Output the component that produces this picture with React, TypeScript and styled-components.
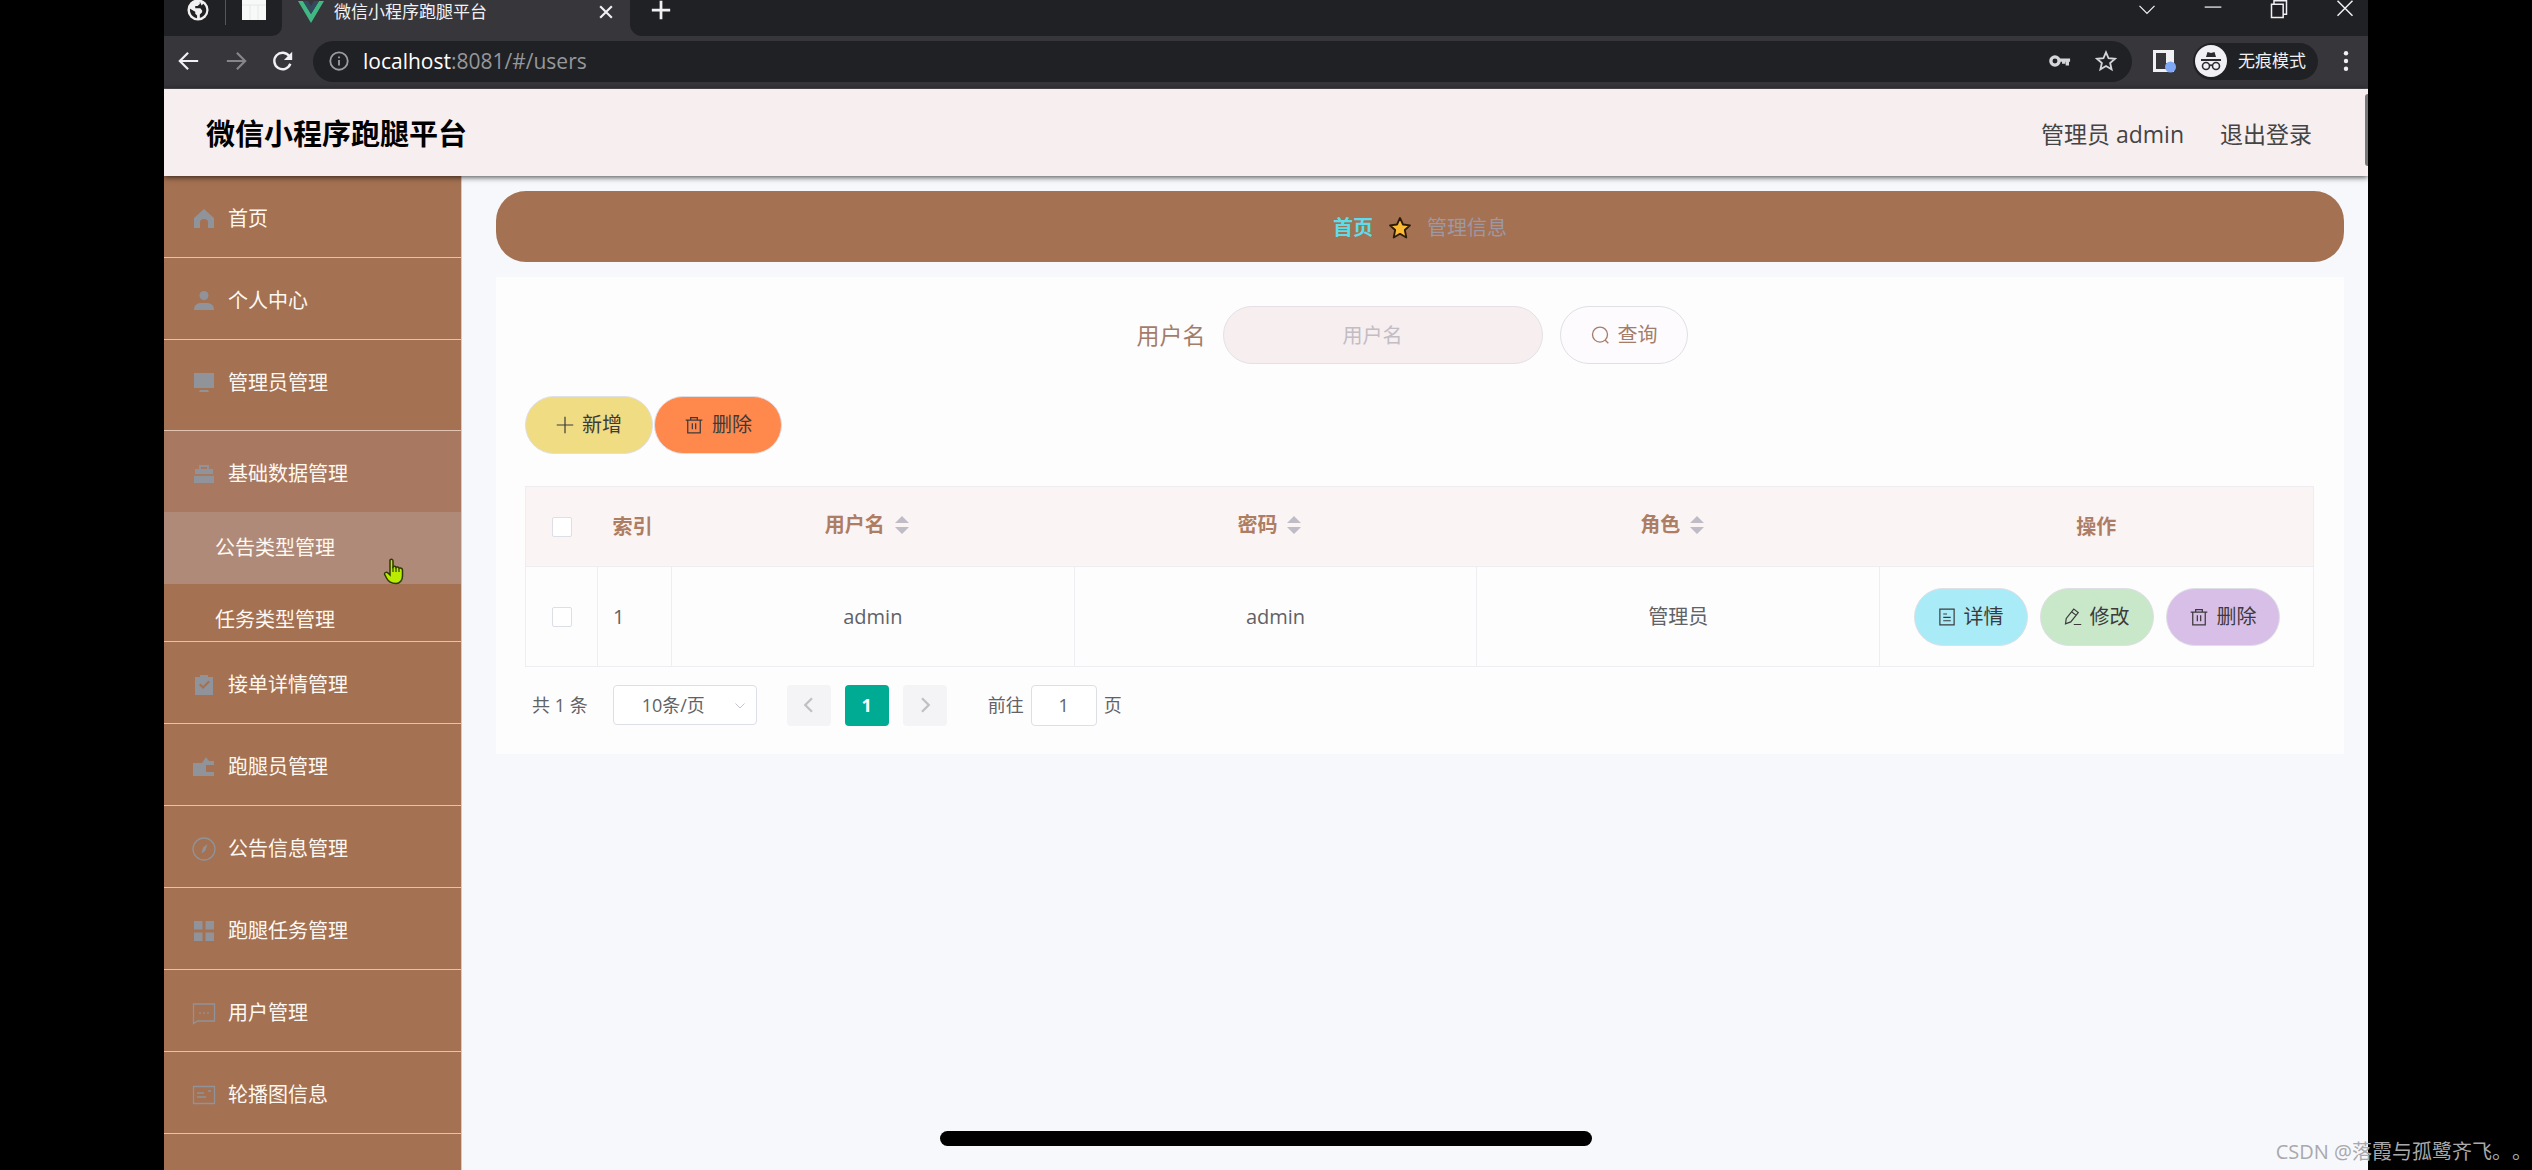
import React from "react";
import styled, { createGlobalStyle } from "styled-components";

const GlobalStyle = createGlobalStyle`
  *, *::before, *::after { box-sizing: border-box; }
  body {
    margin: 0;
    background: #000;
    font-family: "Open Sans", "Noto Sans CJK SC", sans-serif;
    font-size: 20px;
    line-height: 28px;
    color: #606266;
  }
  button, input, select { font: inherit; color: inherit; margin: 0; }
  button { cursor: pointer; border: 0; padding: 0; background: none; }
  a { color: inherit; text-decoration: none; }
  svg { display: block; flex: none; }
`;

/* ---------- frame ---------- */

const Screen = styled.div`
  position: relative;
  height: 100vh;
  padding: 0 164px;
  background: #000;
  overflow: hidden;
`;

const Window = styled.div`
  display: flex;
  flex-direction: column;
  height: 100%;
  background: #f7f8fc;
`;

const HomeIndicator = styled.div`
  position: absolute;
  left: 50%;
  bottom: 24px;
  width: 652px;
  height: 15px;
  margin-left: -326px;
  border-radius: 8px;
  background: #000;
`;

const Watermark = styled.div`
  position: absolute;
  right: 0;
  bottom: 4px;
  font-size: 20px;
  white-space: nowrap;
  text-spacing-trim: space-all;
  color: #a9a9ab;
`;

/* ---------- browser chrome ---------- */

const TabStrip = styled.div`
  display: flex;
  height: 36px;
  flex: none;
  background: #37363b;
  color: #f1f1f3;
`;

const PinnedTabs = styled.div`
  display: flex;
  align-items: center;
  gap: 16px;
  width: 118px;
  padding: 0 0 16px 23px;
  border-radius: 0 0 10px 0;
  background: #202124;
`;

const TabDivider = styled.span`
  width: 1px;
  height: 30px;
  background: #55565a;
`;

const ActiveTab = styled.div`
  display: flex;
  align-items: center;
  gap: 10px;
  width: 348px;
  padding: 0 14px 12px 16px;
  font-size: 17px;
  line-height: 24px;
`;

const TabTitle = styled.span`
  flex: 1;
`;

const StripRest = styled.div`
  display: flex;
  flex: 1;
  align-items: center;
  justify-content: space-between;
  padding: 0 13px 16px 20px;
  border-radius: 0 0 0 12px;
  background: #202124;
`;

const WindowButtons = styled.div`
  display: flex;
  gap: 46px;
`;

const Toolbar = styled.div`
  display: flex;
  align-items: center;
  height: 53px;
  flex: none;
  padding: 0 11px 2px 14px;
  background: #37363b;
  border-bottom: 1px solid #57565b;
  color: #f1f1f3;
`;

const NavButtons = styled.div`
  display: flex;
  gap: 25px;
  margin-right: 19px;
`;

const NavButton = styled.button<{ $dim?: boolean }>`
  color: ${(p) => (p.$dim ? "#85858a" : "#f1f1f3")};
`;

const AddressBar = styled.div`
  display: flex;
  flex: 1;
  align-items: center;
  height: 41px;
  padding: 0 15px;
  gap: 13px;
  border-radius: 21px;
  background: #202124;
`;

const Url = styled.div`
  flex: 1;
  font-size: 21px;
  color: #96979b;
  b { font-weight: 400; color: #fff; }
`;

const AddressIcons = styled.div`
  display: flex;
  gap: 24px;
  color: #d5d6d9;
`;

const ToolbarEnd = styled.div`
  display: flex;
  align-items: center;
  gap: 17px;
  margin-left: 20px;
`;

const Incognito = styled.div`
  display: flex;
  align-items: center;
  gap: 11px;
  height: 37px;
  padding: 0 12px 0 2px;
  border-radius: 19px;
  background: #202124;
  font-size: 17px;
`;

/* ---------- app header ---------- */

const Header = styled.header`
  position: relative;
  z-index: 1;
  display: flex;
  align-items: center;
  flex: none;
  height: 87px;
  padding: 2px 56px 0 42px;
  background: #f7eef0;
  box-shadow: 0 1px 6px rgba(0, 0, 0, 0.75);
`;

const Brand = styled.h1`
  flex: 1;
  margin: 0;
  font-size: 29px;
  line-height: 40px;
  font-weight: 700;
  color: #000;
`;

const HeaderLinks = styled.div`
  display: flex;
  gap: 36px;
  font-size: 23px;
  line-height: 32px;
  color: #444;
`;

const ScrollThumb = styled.div`
  position: absolute;
  right: 0;
  top: 5px;
  width: 3px;
  height: 72px;
  border-radius: 3px 0 0 3px;
  background: #77777a;
`;

/* ---------- sidebar ---------- */

const Body = styled.div`
  display: flex;
  flex: 1;
  min-height: 0;
`;

const Sidebar = styled.nav`
  width: 298px;
  flex: none;
  overflow: hidden;
  background: #a47152;
  border-right: 1px solid #dcc8be;
  color: #fff8f0;
`;

const MenuList = styled.ul`
  margin: 0;
  padding: 0;
  list-style: none;
`;

const MenuEntry = styled.li<{ $tall?: boolean }>`
  padding-bottom: ${(p) => (p.$tall ? 9 : 0)}px;
  border-bottom: 1px solid #e2c2b0;
`;

const MenuLink = styled.a<{ $open?: boolean }>`
  display: flex;
  align-items: center;
  gap: 12px;
  height: 81px;
  padding: 4px 0 0 28px;
  background: ${(p) => (p.$open ? "#a97861" : "transparent")};
  svg { color: #909399; }
`;

const SubMenu = styled.ul`
  margin: 0;
  padding: 0;
  height: 129px;
  overflow: hidden;
  list-style: none;
`;

const SubItem = styled.li<{ $hover?: boolean }>`
  position: relative;
  background: ${(p) => (p.$hover ? "#b08a78" : "transparent")};
`;

const SubLink = styled.a`
  display: flex;
  align-items: center;
  height: 72px;
  padding-left: 51px;
`;

const Pointer = styled.span`
  position: absolute;
  left: 219px;
  top: 46px;
`;

/* ---------- content ---------- */

const Main = styled.main`
  flex: 1;
  min-width: 0;
  padding: 15px 24px 0 34px;
`;

const Breadcrumb = styled.div`
  display: flex;
  align-items: center;
  justify-content: center;
  gap: 15px;
  height: 71px;
  padding-top: 2px;
  margin-bottom: 15px;
  border-radius: 30px;
  background: #a47152;
  color: #9d98a3;
  a { font-weight: 700; color: #5fdcea; }
`;

const Panel = styled.section`
  padding: 29px 30px 28px 29px;
  background: #fefdfe;
`;

const SearchForm = styled.form`
  display: flex;
  align-items: center;
  justify-content: center;
  gap: 17px;
  padding-right: 15px;
  margin-bottom: 32px;
`;

const SearchLabel = styled.label`
  font-size: 23px;
  line-height: 32px;
  color: #a47d6a;
`;

const SearchInput = styled.input`
  width: 320px;
  height: 58px;
  padding: 0 20px 0 0;
  border: 1px solid #e4e0e6;
  border-radius: 29px;
  background: #f7eef0;
  text-align: center;
  outline: none;
  &::placeholder { color: #c2bcc4; opacity: 1; }
`;

const PillButton = styled.button<{ $bg: string; $fg?: string; $compact?: boolean }>`
  display: flex;
  align-items: center;
  justify-content: center;
  gap: 8px;
  width: ${(p) => (p.$compact ? 114 : 128)}px;
  height: 58px;
  border: 1px solid #dfdfe6;
  border-radius: 29px;
  background: ${(p) => p.$bg};
  color: ${(p) => p.$fg ?? "#3d3a3c"};
`;

const ActionBar = styled.div`
  display: flex;
  gap: 1px;
  margin-bottom: 32px;
`;

const RowActions = styled.div`
  display: flex;
  justify-content: center;
  gap: 12px;
`;

const Table = styled.table`
  width: 100%;
  table-layout: fixed;
  border-collapse: collapse;
  border: 1px solid #efedf1;
`;

const Th = styled.th<{ $left?: boolean }>`
  height: 80px;
  padding: 0 15px;
  text-align: ${(p) => (p.$left ? "left" : "center")};
  font-weight: 700;
  background: #fbf4f4;
  color: #ad7d64;
`;

const Td = styled.td<{ $left?: boolean }>`
  height: 100px;
  padding: 0 15px;
  text-align: ${(p) => (p.$left ? "left" : "center")};
  border: 1px solid #efedf1;
`;

const Sortable = styled.div`
  display: flex;
  align-items: center;
  justify-content: center;
  gap: 10px;
  padding: 0 12px 4px 0;
`;

const SortButton = styled.button`
  color: #c0bcc6;
`;

const CheckBox = styled.input`
  appearance: none;
  display: block;
  width: 20px;
  height: 20px;
  margin: 0 auto;
  border: 1px solid #dcdfe6;
  border-radius: 2px;
  background: #fff;
`;

const Pagination = styled.div`
  display: flex;
  align-items: center;
  height: 42px;
  margin-top: 17px;
  padding-left: 7px;
  font-size: 18px;
`;

const SizePicker = styled.div`
  position: relative;
  margin: 0 30px 0 25px;
  svg {
    position: absolute;
    right: 11px;
    top: 15px;
    color: #c0c4cc;
    pointer-events: none;
  }
`;

const SizeSelect = styled.select`
  appearance: none;
  display: block;
  width: 144px;
  height: 40px;
  padding: 0 28px;
  border: 1px solid #dcdfe6;
  border-radius: 4px;
  background: #fff;
`;

const Pager = styled.div`
  display: flex;
  gap: 14px;
  margin-right: 41px;
`;

const PageButton = styled.button<{ $active?: boolean }>`
  display: flex;
  align-items: center;
  justify-content: center;
  width: 44px;
  height: 41px;
  border-radius: 4px;
  font-weight: 700;
  background: ${(p) => (p.$active ? "#00ab93" : "#f4f3f5")};
  color: ${(p) => (p.$active ? "#fff" : "#c0c0c4")};
`;

const Jumper = styled.label`
  display: flex;
  align-items: center;
  gap: 7px;
`;

const PageInput = styled.input`
  width: 66px;
  height: 41px;
  border: 1px solid #dcdfe6;
  border-radius: 4px;
  background: #fff;
  text-align: center;
  outline: none;
`;

/* ---------- icons ---------- */

type IconProps = { size?: number; children: React.ReactNode; fill?: boolean; w?: number };

const Icon = ({ size = 24, children, fill, w = 2 }: IconProps) => (
  <svg
    width={size}
    height={size}
    viewBox="0 0 24 24"
    fill={fill ? "currentColor" : "none"}
    stroke={fill ? "none" : "currentColor"}
    strokeWidth={w}
    aria-hidden="true"
  >
    {children}
  </svg>
);

const GlobeIcon = () => (
  <Icon size={22}>
    <circle cx="12" cy="12" r="11.500" fill="#f1f1f3" stroke="none" />
    <path
      d="M14 3v2.500l-2.500 2H9V10h5.500l2 2.500v2L14 17v3.500c4-.8 7-4.300 7-8.500 0-2.800-1.300-5.200-3.300-6.900L16 7zM3.300 10.500C2.600 15.500 6 20 11 20.900V18l-2-2v-2z"
      fill="#202124"
      stroke="none"
    />
  </Icon>
);

const PageIcon = () => (
  <svg width="24" height="20" viewBox="0 0 24 20" aria-hidden="true">
    <path d="M0 0h24v20H0z" fill="#f7f9f8" />
    <path d="M0 5h24M8 5v15M16 5v15" stroke="#e3e8e6" />
  </svg>
);

const VueIcon = () => (
  <svg width="26" height="22" viewBox="0 0 26 22" aria-hidden="true">
    <path d="M0 0h5l8 13 8-13h5L13 22z" fill="#41b883" />
    <path d="M5 0h5l3 5 3-5h5l-8 13z" fill="#35495e" />
  </svg>
);

const Trash = () => (
  <Icon size={20} w={1.5}>
    <path d="M2 6h20M8 6V3h8v3M4.500 6v15.500h15V6M10 10v7M14 10v7" />
  </Icon>
);

const Chevron = ({ d, size = 20, w = 2 }: { d: string; size?: number; w?: number }) => (
  <Icon size={size} w={w}><path d={d} /></Icon>
);

const SortArrows = () => (
  <svg width="14" height="18" viewBox="0 0 14 18" fill="currentColor" aria-hidden="true">
    <path d="M7 0l7 7H0zM7 18l7-7H0z" />
  </svg>
);

const menuIcons: Record<string, React.ReactNode> = {
  home: <Icon fill><path d="M12 2L2 11v10h6v-6c0-2 2-3 4-3s4 1 4 3v6h6V11z" /></Icon>,
  user: <Icon fill><circle cx="12" cy="6.500" r="4.500" /><path d="M2 21c0-5 3-7 7-7h6c4 0 7 2 7 7z" /></Icon>,
  monitor: <Icon fill><path d="M2 2h20v15H2zM8 19h8l1 2H7z" /></Icon>,
  bag: <Icon fill><path d="M7 7V3h10v4h4v5H3V7zm2 0h6V5H9zM2 14h20v7H2z" /></Icon>,
  check: <Icon fill><path fillRule="evenodd" d="M3 4h5V2h8v2h5v18H3zm4 8l4 4 7-7-1.500-1.500L11 13l-2.500-2.500z" /></Icon>,
  wallet: <Icon fill><path d="M1 8h9l4-6 3 4h5v4h-8v7h8v4H1z" /></Icon>,
  compass: <Icon w={1.3}><circle cx="12" cy="12" r="11" /><path d="M15.500 7l-2 6.500-4 3 1.500-6z" fill="currentColor" stroke="none" /></Icon>,
  grid: <Icon fill><path d="M2 2h8.500v8.500H2zM13.500 2H22v8.500h-8.500zM2 13.500h8.500V22H2zM13.500 13.500H22V22h-8.500z" /></Icon>,
  chat: <Icon w={1.3}><path d="M1.500 3h21v17h-17l-4 2.500zM8 11v2M12 11v2M16 11v2" /></Icon>,
  postcard: <Icon w={1.3}><path d="M1.500 3.500h21v17h-21zM5 10h7M5 14h9M16 8h3" /></Icon>,
};

/* ---------- data ---------- */

type Menu = { label: string; icon: string; tall?: boolean; children?: string[] };

const menus: Menu[] = [
  { label: "首页", icon: "home" },
  { label: "个人中心", icon: "user" },
  { label: "管理员管理", icon: "monitor", tall: true },
  { label: "基础数据管理", icon: "bag", children: ["公告类型管理", "任务类型管理"] },
  { label: "接单详情管理", icon: "check" },
  { label: "跑腿员管理", icon: "wallet" },
  { label: "公告信息管理", icon: "compass" },
  { label: "跑腿任务管理", icon: "grid" },
  { label: "用户管理", icon: "chat" },
  { label: "轮播图信息", icon: "postcard" },
];

const rows = [{ id: 1, username: "admin", password: "admin", role: "管理员" }];

const HandPointer = () => (
  <svg width="22" height="27" viewBox="0 0 22 27" aria-hidden="true">
    <path
      d="M7 2c1.500-1.500 3-.5 3 1v6c1-1 2.500-1 3 .5 1-1 2.500-.5 3 .8 1.500-.8 3.500 0 3.500 2V18c0 4-2.500 7.500-6.500 7.500-5 0-8-2.500-9.500-5.500L1.500 16c0-2 2.500-2 3.500-1l2 2z"
      fill="#b9ec00"
      stroke="#2e3a05"
      strokeWidth="1.500"
    />
    <path d="M10 9v5M13 10v4M16 11v3" stroke="#2e3a05" strokeWidth="1.200" />
  </svg>
);

/* ---------- sections ---------- */

const BrowserChrome = () => (
  <>
    <TabStrip>
      <PinnedTabs>
        <GlobeIcon />
        <TabDivider />
        <PageIcon />
      </PinnedTabs>
      <ActiveTab>
        <VueIcon />
        <TabTitle>微信小程序跑腿平台</TabTitle>
        <button aria-label="关闭标签页"><Icon size={20} w={2.600}><path d="M5 5l14 14M19 5L5 19" /></Icon></button>
      </ActiveTab>
      <StripRest>
        <button aria-label="新建标签页"><Icon size={22} w={3}><path d="M12 2v20M2 12h20" /></Icon></button>
        <WindowButtons>
          <button aria-label="搜索标签页"><Chevron d="M3 7l9 9 9-9" w={1.500} /></button>
          <button aria-label="最小化"><Icon size={20} w={1.500}><path d="M2 8.500h20" /></Icon></button>
          <button aria-label="还原"><Icon size={20} w={1.800}><path d="M3 5h14v16H3zM6 5V1h15v16h-4" /></Icon></button>
          <button aria-label="关闭"><Icon size={20} w={1.800}><path d="M3 1l18 18M21 1L3 19" /></Icon></button>
        </WindowButtons>
      </StripRest>
    </TabStrip>
    <Toolbar>
      <NavButtons>
        <NavButton aria-label="后退"><Icon size={22} w={2.400}><path d="M22 12H3M11 3l-9 9 9 9" /></Icon></NavButton>
        <NavButton $dim aria-label="前进"><Icon size={22} w={2.400}><path d="M2 12h19M13 3l9 9-9 9" /></Icon></NavButton>
        <NavButton aria-label="刷新"><Icon size={22} w={2.600}><path d="M20 15a9 9 0 1 1-1-8" /><path d="M22 2v9h-9z" fill="currentColor" stroke="none" /></Icon></NavButton>
      </NavButtons>
      <AddressBar>
        <Icon size={22} w={2}><circle cx="12" cy="12" r="9.500" stroke="#9b9ca0" /><path d="M12 11v6M12 7v2" stroke="#9b9ca0" /></Icon>
        <Url><b>localhost</b>:8081/#/users</Url>
        <AddressIcons>
          <Icon size={22} w={3.600}><circle cx="6.500" cy="12" r="4.500" /><path d="M11 11h12M20 11v6M16 11v4" /></Icon>
          <Icon size={22} w={2}><path d="M12 2.500l2.800 6.500 7 .6-5.300 4.600 1.600 6.900L12 17.500l-6.100 3.600 1.600-6.900L2.200 9.600l7-.6z" /></Icon>
        </AddressIcons>
      </AddressBar>
      <ToolbarEnd>
        <Icon size={24} w={3}>
          <path d="M2.500 2.500h18v19h-18z" />
          <path d="M14 2h8v12h-8z" fill="currentColor" stroke="none" />
          <circle cx="18.500" cy="18" r="5.500" fill="#7fa9f4" stroke="none" />
        </Icon>
        <Incognito>
          <svg width="32" height="32" viewBox="0 0 32 32" aria-hidden="true">
            <circle cx="16" cy="16" r="16" fill="#f1f1f5" />
            <path d="M11 12l1.500-5 3.500 1 3.500-1 1.500 5zM6 14h20v2H6z" fill="#2b2b30" />
            <g fill="none" stroke="#2b2b30" strokeWidth="1.600">
              <circle cx="11" cy="21" r="3.500" />
              <circle cx="21" cy="21" r="3.500" />
              <path d="M14.500 20.500q1.500-1 3 0" />
            </g>
          </svg>
          无痕模式
        </Incognito>
        <NavButton aria-label="菜单"><Icon size={22} fill><circle cx="12" cy="3.500" r="2.400" /><circle cx="12" cy="12" r="2.400" /><circle cx="12" cy="20.500" r="2.400" /></Icon></NavButton>
      </ToolbarEnd>
    </Toolbar>
  </>
);

const SideMenu = () => (
  <Sidebar>
    <MenuList>
      {menus.map((m) => (
        <MenuEntry key={m.label} $tall={m.tall}>
          <MenuLink href="#" $open={!!m.children}>
            {menuIcons[m.icon]}
            {m.label}
          </MenuLink>
          {m.children && (
            <SubMenu>
              {m.children.map((c, i) => (
                <SubItem key={c} $hover={i === 0}>
                  <SubLink href="#">{c}</SubLink>
                  {i === 0 && <Pointer><HandPointer /></Pointer>}
                </SubItem>
              ))}
            </SubMenu>
          )}
        </MenuEntry>
      ))}
    </MenuList>
  </Sidebar>
);

const SortHead = ({ label }: { label: string }) => (
  <Th>
    <Sortable>
      {label}
      <SortButton aria-label={`按${label}排序`}><SortArrows /></SortButton>
    </Sortable>
  </Th>
);

const UserTable = () => (
  <Table>
    <colgroup>
      <col style={{ width: 72 }} />
      <col style={{ width: 74 }} />
      <col />
      <col />
      <col />
      <col style={{ width: 434 }} />
    </colgroup>
    <thead>
      <tr>
        <Th><CheckBox type="checkbox" aria-label="全选" /></Th>
        <Th $left>索引</Th>
        <SortHead label="用户名" />
        <SortHead label="密码" />
        <SortHead label="角色" />
        <Th>操作</Th>
      </tr>
    </thead>
    <tbody>
      {rows.map((r) => (
        <tr key={r.id}>
          <Td><CheckBox type="checkbox" aria-label={`选择 ${r.username}`} /></Td>
          <Td $left>{r.id}</Td>
          <Td>{r.username}</Td>
          <Td>{r.password}</Td>
          <Td>{r.role}</Td>
          <Td>
            <RowActions>
              <PillButton $compact $bg="#a9ecf8">
                <Icon size={18} w={1.600}><path d="M2.500 1.500h19v21h-19zM7 8h5M7 12.500h10M7 17h10" /></Icon>
                详情
              </PillButton>
              <PillButton $compact $bg="#c9e8ca">
                <Icon size={18} w={1.600}><path d="M2 21l1-7L13 1.500l6 4.500L9 18.500zM10 5l6 4.500M13 22h10" /></Icon>
                修改
              </PillButton>
              <PillButton $compact $bg="#d8bfe8"><Trash />删除</PillButton>
            </RowActions>
          </Td>
        </tr>
      ))}
    </tbody>
  </Table>
);

const Pages = () => (
  <Pagination>
    <span>共 1 条</span>
    <SizePicker>
      <SizeSelect aria-label="每页条数" defaultValue="10">
        <option value="10">10条/页</option>
      </SizeSelect>
      <Chevron d="M3 7l9 9 9-9" size={12} />
    </SizePicker>
    <Pager>
      <PageButton aria-label="上一页"><Chevron d="M16 3l-9 9 9 9" w={3} size={18} /></PageButton>
      <PageButton $active>1</PageButton>
      <PageButton aria-label="下一页"><Chevron d="M8 3l9 9-9 9" w={3} size={18} /></PageButton>
    </Pager>
    <Jumper>
      前往
      <PageInput defaultValue="1" />
      页
    </Jumper>
  </Pagination>
);

export default function App() {
  return (
    <Screen>
      <GlobalStyle />
      <Window>
        <BrowserChrome />
        <Header>
          <Brand>微信小程序跑腿平台</Brand>
          <HeaderLinks>
            <span>管理员 admin</span>
            <a href="#">退出登录</a>
          </HeaderLinks>
          <ScrollThumb />
        </Header>
        <Body>
          <SideMenu />
          <Main>
            <Breadcrumb>
              <a href="#">首页</a>
              <svg width="24" height="24" viewBox="0 0 24 24" aria-hidden="true">
                <path
                  d="M12 2l3 6.500 7 .8-5.200 4.700 1.500 7.500L12 17.800l-6.300 3.700L7.200 14 2 9.300l7-.8z"
                  fill="#fcbb33"
                  stroke="#2b1a0a"
                  strokeWidth="1.800"
                  strokeLinejoin="round"
                />
              </svg>
              <span>管理信息</span>
            </Breadcrumb>
            <Panel>
              <SearchForm onSubmit={(e) => e.preventDefault()}>
                <SearchLabel htmlFor="username">用户名</SearchLabel>
                <SearchInput id="username" placeholder="用户名" />
                <PillButton $bg="#fdfbfd" $fg="#a47d6a">
                  <Icon size={20} w={1.600}><circle cx="12" cy="11.500" r="9" /><path d="M18 18l4 4" /></Icon>
                  查询
                </PillButton>
              </SearchForm>
              <ActionBar>
                <PillButton $bg="#f0dc82">
                  <Icon size={18} w={1.600}><path d="M12 1v22M1 12h22" /></Icon>
                  新增
                </PillButton>
                <PillButton $bg="#ff884d"><Trash />删除</PillButton>
              </ActionBar>
              <UserTable />
              <Pages />
            </Panel>
          </Main>
        </Body>
      </Window>
      <HomeIndicator />
      <Watermark>CSDN @落霞与孤鹭齐飞。。</Watermark>
    </Screen>
  );
}
